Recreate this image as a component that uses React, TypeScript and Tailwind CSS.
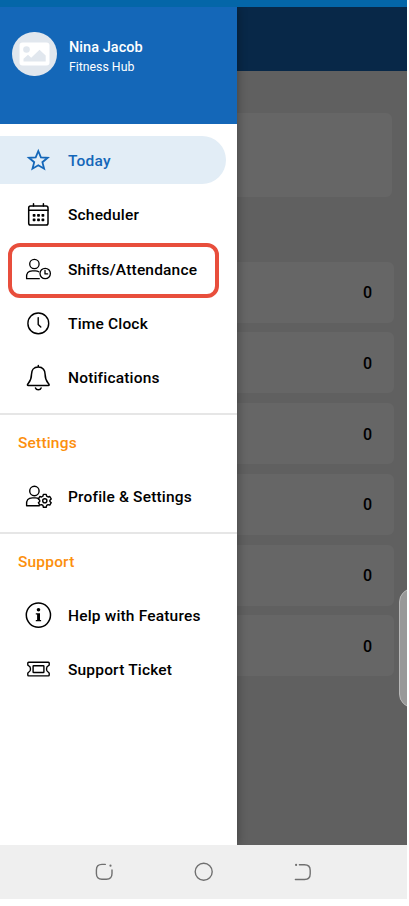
import React from "react";

const svgBase = {
  fill: "none",
  stroke: "currentColor",
  strokeLinecap: "round" as const,
  strokeLinejoin: "round" as const,
};

const Icon = ({ children, sw = 1.4 }: { children: React.ReactNode; sw?: number }) => (
  <svg width="28" height="28" viewBox="0 0 28 28" strokeWidth={sw} {...svgBase} className="shrink-0">
    {children}
  </svg>
);

const StarIcon = () => (
  <Icon sw={1.8}>
    <path strokeLinejoin="miter" d="M14.3 4 16.9 10.3 23.7 10.8 18.4 15.2 20.1 21.7 14.3 18.2 8.5 21.7 10.2 15.2 4.9 10.8 11.7 10.3Z" />
  </Icon>
);

const CalendarIcon = () => (
  <Icon sw={1.5}>
    <rect x="4.7" y="5.1" width="19.3" height="18.9" rx="1.8" />
    <path d="M4.7 9.2H24M9.5 2.8V5.1M19.4 2.8V5.1" />
    <g fill="currentColor" stroke="none">
      {[13, 17.4].map((y) =>
        [8.7, 13.1, 17.5].map((x) => <rect key={`${x}-${y}`} x={x} y={y} width="2.8" height="2.8" rx=".7" />)
      )}
    </g>
  </Icon>
);

const PersonPaths = () => (
  <>
    <circle cx="10.4" cy="8" r="4.7" />
    <path d="M15.3 22.7H2.6C1.9 17 4.3 14.9 8.3 14.9H11.5C12.9 14.9 13.9 15.2 14.7 15.7" />
  </>
);

const PersonClockIcon = () => (
  <Icon sw={1.3}>
    <PersonPaths />
    <circle cx="21.2" cy="17.5" r="5.2" />
    <path d="M21 14.5V17.9H23.6" />
  </Icon>
);

const PersonGearIcon = () => (
  <Icon sw={1.4}>
    <PersonPaths />
    <path d="M19.4 11.4H22.2L22.7 13.2 24.1 14 25.8 13.5 27.2 15.9 25.9 17.2V18.4L27.2 19.7 25.8 22.1 24.1 21.6 22.7 22.4 22.2 24.2H19.4L18.9 22.4 17.5 21.6 15.8 22.1 14.4 19.7 15.7 18.4V17.2L14.4 15.9 15.8 13.5 17.5 14 18.9 13.2Z" />
    <circle cx="20.8" cy="17.8" r="2.1" />
  </Icon>
);

const ClockIcon = () => (
  <Icon>
    <circle cx="14.3" cy="13.4" r="10.4" />
    <path d="M14.2 7.6V14.4L16.8 16.9" />
  </Icon>
);

const BellIcon = () => (
  <Icon sw={1.5}>
    <path d="M14.3 1.5V3M14.3 3C9.5 3 7.5 6.4 7.5 10.2 7.5 16.1 5.5 17.8 3.7 20.2 3.2 21 3.5 21.5 4.2 21.5H24.4C25.1 21.5 25.4 21 24.9 20.2 23.1 17.8 21.1 16.1 21.1 10.2 21.1 6.4 19.1 3 14.3 3ZM11.5 24C12.3 26.4 16.3 26.4 17.1 24" />
  </Icon>
);

const InfoIcon = () => (
  <Icon sw={1.5}>
    <circle cx="14.4" cy="13.1" r="12.1" />
    <circle cx="14.5" cy="7.8" r="1.8" fill="currentColor" stroke="none" />
    <path fill="currentColor" stroke="none" d="M11.8 11.2H16V17.9H17.1V19.3H11.8V17.9H13.1V12.6H11.8Z" />
  </Icon>
);

const TicketIcon = () => (
  <Icon sw={1.4}>
    <path d="M4.6 6.3H24.4Q25.2 6.3 25.2 7.1V8.7Q25.2 9.3 24.5 9.6C21.8 10.8 21.8 15.2 24.5 16.4Q25.2 16.7 25.2 17.3V19.1Q25.2 19.9 24.4 19.9H4.6Q3.8 19.9 3.8 19.1V17.3Q3.8 16.7 4.5 16.4C7.2 15.2 7.2 10.8 4.5 9.6Q3.8 9.3 3.8 8.7V7.1Q3.8 6.3 4.6 6.3Z" />
    <rect x="9.1" y="9.7" width="10.8" height="6.8" rx=".6" />
  </Icon>
);

type RowProps = { icon: React.ReactNode; label: string; active?: boolean; outlined?: boolean };

const Row = ({ icon, label, active, outlined }: RowProps) => (
  <li
    className={`relative flex h-[47.6px] w-[226px] items-center pt-[2px] pl-6 ${
      active ? "rounded-r-full bg-[#e2edf6] text-[#1467b9]" : "text-black"
    }`}
  >
    {icon}
    <span className="ml-4 text-[15.5px] leading-5 font-medium tracking-[0.18px] whitespace-nowrap">{label}</span>
    {outlined && <span className="absolute -top-[2px] left-2 h-[55px] w-[211px] rounded-xl border-4 border-[#e84e3c]" />}
  </li>
);

const SectionTitle = ({ children }: { children: React.ReactNode }) => (
  <h2 className="h-5 pl-[18px] text-[15.5px] leading-5 font-medium tracking-[0.18px] text-[#fc8f0d]">{children}</h2>
);

const Drawer = () => (
  <aside className="relative z-10 flex w-[237px] shrink-0 flex-col bg-white shadow-[1px_0_9px_rgba(0,0,0,0.3)]">
    <header className="flex h-[116.5px] shrink-0 items-start bg-[#1467b8] pt-[24.5px] pl-3">
      <div className="flex h-[44.5px] w-[44.5px] items-center justify-center rounded-full bg-[#e1e7ee]">
        <svg width="31" height="24" viewBox="0 0 31 24">
          <rect x=".5" y=".5" width="30" height="23" rx="3" fill="#fff" />
          <circle cx="7.5" cy="7.5" r="3.3" fill="#e1e7ee" />
          <path d="M4.5 19.5V16.7L9 12.8 12.2 15.8 20.5 7.8 26.7 13.6V19.5Z" fill="#e1e7ee" />
        </svg>
      </div>
      <div className="ml-[12.5px] pt-[7.5px] text-white">
        <div className="text-[14.5px] leading-[18px] font-medium tracking-[0.05px]">Nina Jacob</div>
        <div className="text-[12.3px] leading-5">Fitness Hub</div>
      </div>
    </header>
    <ul className="mt-[12.5px] flex flex-col gap-[6.8px]">
      <Row icon={<StarIcon />} label="Today" active />
      <Row icon={<CalendarIcon />} label="Scheduler" />
      <Row icon={<PersonClockIcon />} label="Shifts/Attendance" outlined />
      <Row icon={<ClockIcon />} label="Time Clock" />
      <Row icon={<BellIcon />} label="Notifications" />
    </ul>
    <section className="mt-[12px] border-t-2 border-[#e6e6e6] pt-[18px]">
      <SectionTitle>Settings</SectionTitle>
      <ul className="mt-[19px]">
        <Row icon={<PersonGearIcon />} label="Profile & Settings" />
      </ul>
    </section>
    <section className="mt-[12px] border-t-2 border-[#e6e6e6] pt-[18px]">
      <SectionTitle>Support</SectionTitle>
      <ul className="mt-[19px] flex flex-col gap-[6.8px]">
        <Row icon={<InfoIcon />} label="Help with Features" />
        <Row icon={<TicketIcon />} label="Support Ticket" />
      </ul>
    </section>
  </aside>
);

const Dashboard = () => (
  <main className="relative flex-1 overflow-hidden bg-[#606060]">
    <div className="h-[63.5px] bg-[#082848]" />
    <div className="mt-[42px] mr-[15px] h-[84.5px] rounded-r-md bg-[#666666]" />
    <div className="mt-[64.5px] mr-[13px] flex flex-col gap-[9.8px]">
      {[0, 0, 0, 0, 0, 0].map((count, i) => (
        <div key={i} className="flex h-[61px] items-center justify-end rounded-r-md bg-[#666666] pt-[2px] pr-[22px] text-[16px] font-medium text-black">
          {count}
        </div>
      ))}
    </div>
    <div className="absolute top-[581px] -right-2 h-[120px] w-4 rounded-l-[14px] border border-[#b8b8b8] bg-[#999]" />
  </main>
);

const NavBar = () => (
  <nav className="flex h-[54px] items-center justify-between bg-[#efefef] pr-[94px] pl-[94px] text-[#707070]">
    <svg width="20" height="20" viewBox="0 0 20 20" strokeWidth="1.4" {...svgBase}>
      <path d="M11.3 2.4H8Q2.4 2.4 2.4 8V11.5Q2.4 17.2 8 17.2H12.4Q18 17.2 18 11.5V8" />
      <circle cx="16.5" cy="3.7" r="1.1" fill="currentColor" stroke="none" />
    </svg>
    <svg width="20" height="20" viewBox="0 0 20 20" strokeWidth="1.4" {...svgBase}>
      <circle cx="9.7" cy="9.8" r="8.5" />
    </svg>
    <svg width="20" height="20" viewBox="0 0 20 20" strokeWidth="1.4" {...svgBase}>
      <path d="M6.4 2.8H11.5Q17.2 2.8 17.2 8.4V11.8Q17.2 17.5 11.5 17.5H2.4" />
      <circle cx="3.1" cy="2.9" r="1.1" fill="currentColor" stroke="none" />
    </svg>
  </nav>
);

export default function App() {
  return (
    <div className="h-[906px] w-[409px] overflow-hidden bg-white font-['Roboto',sans-serif]">
      <div className="flex h-[899px] w-[407px] flex-col overflow-hidden">
        <div className="h-[7px] shrink-0 bg-[#0466a8]" />
        <div className="flex h-[838px] shrink-0 overflow-hidden">
          <Drawer />
          <Dashboard />
        </div>
        <NavBar />
      </div>
    </div>
  );
}
